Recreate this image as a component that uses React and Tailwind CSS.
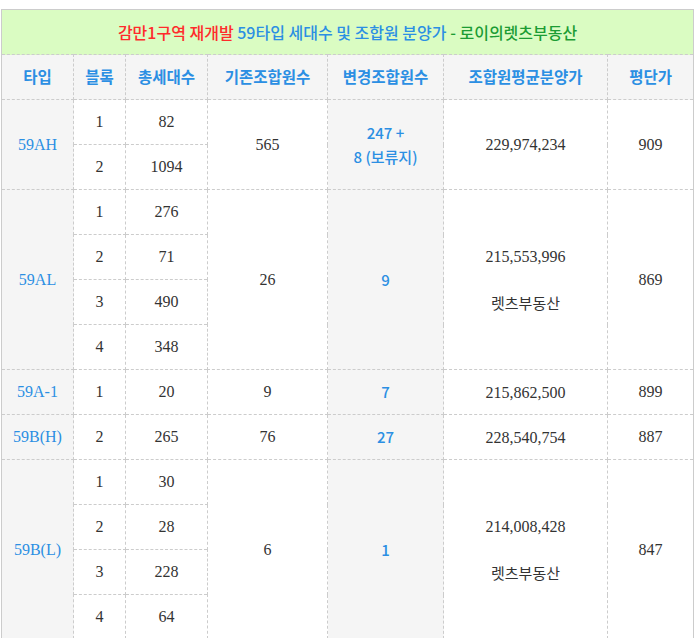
const sans = { fontFamily: '"Noto Sans CJK KR", "Noto Sans", sans-serif' };

const rows = [
  { type: "59AH", blocks: [["1", "82"], ["2", "1094"]], orig: "565", changed: ["247 +", "8 (보류지)"], price: "229,974,234", note: false, pyeong: "909" },
  { type: "59AL", blocks: [["1", "276"], ["2", "71"], ["3", "490"], ["4", "348"]], orig: "26", changed: ["9"], price: "215,553,996", note: true, pyeong: "869" },
  { type: "59A-1", blocks: [["1", "20"]], orig: "9", changed: ["7"], price: "215,862,500", note: false, pyeong: "899" },
  { type: "59B(H)", blocks: [["2", "265"]], orig: "76", changed: ["27"], price: "228,540,754", note: false, pyeong: "887" },
  { type: "59B(L)", blocks: [["1", "30"], ["2", "28"], ["3", "228"], ["4", "64"]], orig: "6", changed: ["1"], price: "214,008,428", note: true, pyeong: "847" },
];

const headers = ["타입", "블록", "총세대수", "기존조합원수", "변경조합원수", "조합원평균분양가", "평단가"];

const cell = "border border-dashed border-[#cccccc] text-center align-middle p-0";

export default function App() {
  return (
    <div className="bg-white w-[694px] pt-[9px] pl-px">
      <table
        className="table-fixed border-collapse w-[692px] border border-solid border-[#cccccc] text-[16px] text-[#333333]"
        style={{ fontFamily: '"Liberation Serif", "Noto Sans CJK KR", serif' }}
      >
        <colgroup>
          <col className="w-[72px]" />
          <col className="w-[52px]" />
          <col className="w-[82px]" />
          <col className="w-[120px]" />
          <col className="w-[116px]" />
          <col className="w-[164px]" />
          <col className="w-[86px]" />
        </colgroup>
        <thead>
          <tr className="h-[45px]">
            <th colSpan={7} className="border border-solid border-b-0 border-[#cccccc] bg-[#dafcc2] text-[16px] font-medium p-0" style={sans}>
              <span className="text-[#ff2b2b]">감만1구역 재개발</span>{" "}
              <span className="text-[#2b8fe3]">59타입 세대수 및 조합원 분양가</span>{" "}
              <span className="text-[#1c9c34]">- 로이의렛츠부동산</span>
            </th>
          </tr>
          <tr className="h-[45px] bg-[#f5f5f5]">
            {headers.map((h) => (
              <th key={h} className={`${cell} text-[15.5px] font-semibold text-[#2b8fe3]`} style={sans}>
                {h}
              </th>
            ))}
          </tr>
        </thead>
        <tbody>
          {rows.map((r) =>
            r.blocks.map(([b, n], i) => (
              <tr key={r.type + b} className="h-[45px]">
                {i === 0 && (
                  <td rowSpan={r.blocks.length} className={`${cell} bg-[#f5f5f5] text-[#2b8fe3]`}>
                    {r.type}
                  </td>
                )}
                <td className={cell}>{b}</td>
                <td className={cell}>{n}</td>
                {i === 0 && (
                  <>
                    <td rowSpan={r.blocks.length} className={cell}>{r.orig}</td>
                    <td rowSpan={r.blocks.length} className={`${cell} bg-[#f5f5f5] text-[#2b8fe3] text-[15px] font-medium leading-[24px]`} style={sans}>
                      {r.changed.map((c) => (
                        <div key={c}>{c}</div>
                      ))}
                    </td>
                    <td rowSpan={r.blocks.length} className={`${cell} leading-[23px]`}>
                      <div>{r.price}</div>
                      {r.note && (
                        <>
                          <div>&nbsp;</div>
                          <div className="text-[15px]" style={sans}>렛츠부동산</div>
                        </>
                      )}
                    </td>
                    <td rowSpan={r.blocks.length} className={cell}>{r.pyeong}</td>
                  </>
                )}
              </tr>
            ))
          )}
        </tbody>
      </table>
    </div>
  );
}
